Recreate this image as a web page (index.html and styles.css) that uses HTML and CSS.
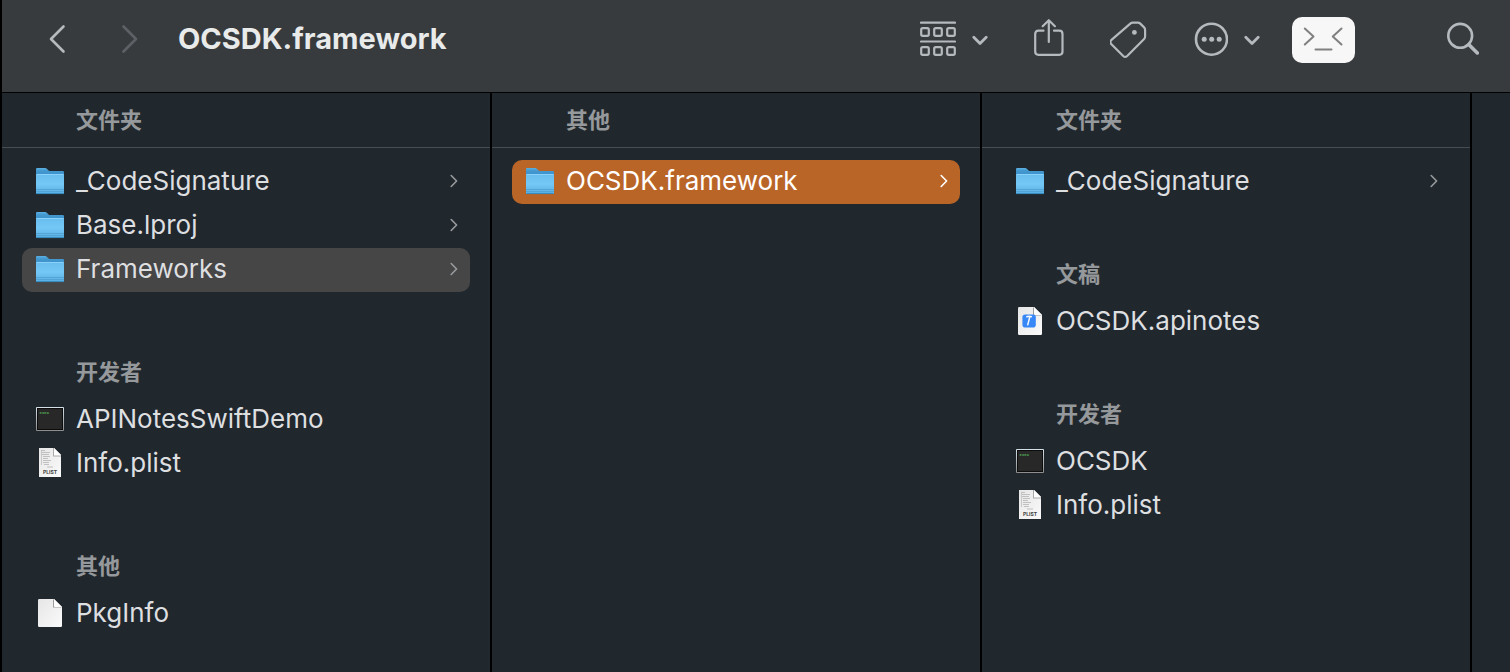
FILE: index.html
```html
<!DOCTYPE html>
<html lang="zh-CN">
<head>
<meta charset="utf-8">
<title>OCSDK.framework</title>
<link rel="stylesheet" href="styles.css">
</head>
<body>
<svg class="defs" aria-hidden="true">
  <defs>
    <linearGradient id="folder-back" x1="0" y1="0" x2="0" y2="1"><stop offset="0" stop-color="#5cb2e4"/><stop offset="0.3" stop-color="#4398cf"/><stop offset="1" stop-color="#3a8fca"/></linearGradient>
    <linearGradient id="folder-front" x1="0" y1="0" x2="0" y2="1"><stop offset="0" stop-color="#67bdee"/><stop offset="0.5" stop-color="#74c8f6"/><stop offset="1" stop-color="#56aee2"/></linearGradient>
    <linearGradient id="paper" x1="0" y1="0" x2="1" y2="1"><stop offset="0" stop-color="#e6e6e6"/><stop offset="1" stop-color="#fafafa"/></linearGradient>
    <linearGradient id="bezel" x1="0" y1="0" x2="0" y2="1"><stop offset="0" stop-color="#d5e2ea"/><stop offset="1" stop-color="#8c8c8c"/></linearGradient>
    <symbol id="folder" viewBox="0 0 28 28">
      <path d="M0 2.2Q0 1 1.2 1H9.2Q10 1 10.8 1.7L12.6 3.4Q13.2 4 14.2 4H26.8Q28 4 28 5.2V10H0Z" fill="url(#folder-back)"/>
      <path d="M0 7.800Q0 7 .8 7H27.200Q28 7 28 7.800V26Q28 27 27 27H1Q0 27 0 26Z" fill="url(#folder-front)"/>
      <path d="M0 22.500H28M0 24.500H28" stroke="#509fd0" stroke-width=".8"/>
      <path d="M.5 26.600H27.500" stroke="#3587bd" stroke-width="1"/>
      <path d="M.6 7.500H27.400" stroke="#8bd2fb" stroke-width="1"/>
    </symbol>
    <symbol id="exec" viewBox="0 0 28 28">
      <rect x="0" y="2" width="28" height="24" rx="1" fill="url(#bezel)"/>
      <rect x="1" y="3" width="26" height="22" fill="#0c0c0c"/>
      <rect x="2" y="4" width="24" height="20" fill="#282828"/>
      <text x="3.500" y="9" class="exec-label">exec</text>
    </symbol>
    <symbol id="file" viewBox="0 0 28 28">
      <path d="M2 1.200Q2 0 3.200 0H18L26 8V26.800Q26 28 24.800 28H3.200Q2 28 2 26.800Z" fill="url(#paper)"/>
      <path d="M17 1V8.500H25L25.600 8 18 0Z" fill="#9c9c9c"/>
      <path d="M18 0L26 8H19Q18 8 18 7Z" fill="#fff"/>
    </symbol>
    <symbol id="notes" viewBox="0 0 28 28">
      <use href="#file"/>
      <rect x="6.400" y="7.400" width="13.400" height="13.200" rx="2.800" fill="#3787f6"/>
      <path d="M10.300 10Q12.600 8.700 16 9.700M13.900 9.500L11.600 18.400" fill="none" stroke="#f4f8ff" stroke-width="1.500"/>
    </symbol>
    <symbol id="plist" viewBox="0 0 28 30">
      <path d="M3 0H18L25 7V29H3Z" fill="url(#paper)"/>
      <path d="M17 0V8.600H25V7L18 0Z" fill="#aaa"/>
      <path d="M18 0L25 7V7.600H18Z" fill="#fff"/>
      <path d="M5 2.500H9M6 4.500H14M6 6.500H13M7 8.500H14M7 10.500H12M7 12.500H15M7 14.500H13M8 16.500H13M11 19H17" stroke="#b4b4b4" stroke-width=".8"/>
      <path d="M5.500 3V17" stroke="#c9c9c9" stroke-width="1"/>
      <text x="14" y="26" text-anchor="middle" class="plist-label">PLIST</text>
    </symbol>
    <symbol id="arrow" viewBox="0 0 8 14"><path d="M1.200 1.500L6.600 7 1.200 12.500" fill="none" stroke="currentColor" stroke-width="1.600" stroke-linecap="round" stroke-linejoin="round"/></symbol>
    <symbol id="down" viewBox="0 0 16 40"><path d="M1.800 18.300L8 24.500 14.200 18.300" fill="none" stroke="currentColor" stroke-width="2.800" stroke-linecap="round" stroke-linejoin="round"/></symbol>
  </defs>
</svg>
<div class="window">
  <header class="toolbar">
    <nav class="history">
      <button type="button" aria-label="返回"><svg width="18" height="40" viewBox="0 0 18 40"><path d="M15.500 7.500L3 20 15.500 32.500" class="line-bold"/></svg></button>
      <button type="button" class="dim" aria-label="前进" disabled><svg width="18" height="40" viewBox="0 0 18 40"><path d="M2.500 7.500L15 20 2.500 32.500" class="line-bold"/></svg></button>
    </nav>
    <h1>OCSDK.framework</h1>
    <div class="tools">
      <button type="button" class="menu" aria-label="群组">
        <svg width="36" height="40" viewBox="0 0 36 40"><path d="M1 3.700H35M1 22.500H35" class="line"/><g class="line"><rect x="1.200" y="9.200" width="7.600" height="7.600" rx="1.500"/><rect x="14.200" y="9.200" width="7.600" height="7.600" rx="1.500"/><rect x="27.200" y="9.200" width="7.600" height="7.600" rx="1.500"/><rect x="1.200" y="28.200" width="7.600" height="7.600" rx="1.500"/><rect x="14.200" y="28.200" width="7.600" height="7.600" rx="1.500"/><rect x="27.200" y="28.200" width="7.600" height="7.600" rx="1.500"/></g></svg>
        <svg width="16" height="40"><use href="#down"/></svg>
      </button>
      <button type="button" aria-label="共享"><svg width="30" height="40" viewBox="0 0 30 40"><path d="M9.500 11.700H4.500Q1.200 11.700 1.200 15V32.500Q1.200 35.800 4.500 35.800H25.200Q28.500 35.800 28.500 32.500V15Q28.500 11.700 25.200 11.700H20M14.800 23V1.500M8.700 7.200L14.800 1.200 20.900 7.200" class="line"/></svg></button>
      <button type="button" aria-label="标签"><svg width="38" height="40" viewBox="0 0 38 40"><path d="M20.300 4.400Q21.200 3.600 22.500 3.600H27.500Q29 3.600 30 4.600L33.800 8.400Q34.800 9.400 34.800 10.900V17.500Q34.800 19 33.800 20L16.900 37Q14.900 38.800 12.900 37L.9 25Q-.9 23 .9 21.200Z" class="line" transform="translate(.3 0)"/><circle cx="24.400" cy="13.400" r="2.400" fill="currentColor"/></svg></button>
      <div class="pair">
        <button type="button" class="menu" aria-label="更多">
          <svg width="34" height="40" viewBox="0 0 34 40"><circle cx="17.500" cy="20.200" r="15.500" class="line-bold"/><g fill="currentColor"><circle cx="10.200" cy="20.200" r="2.500"/><circle cx="17.700" cy="20.200" r="2.500"/><circle cx="25.200" cy="20.200" r="2.500"/></g></svg>
          <svg width="16" height="40"><use href="#down"/></svg>
        </button>
        <button type="button" class="app" aria-label="终端"><svg width="63" height="46" viewBox="0 0 63 46"><path d="M12.800 11.500L21.500 19.500 12.800 27.500M49.500 11.500L40.800 19.500 49.500 27.500M23.500 32.500H39.500" class="face"/></svg></button>
      </div>
      <button type="button" class="search" aria-label="搜索"><svg width="32" height="40" viewBox="0 0 32 40"><circle cx="13.200" cy="16.800" r="11.900" class="line-bold"/><path d="M21.800 25.400L30.300 33.900" class="handle"/></svg></button>
    </div>
  </header>
  <main class="browser">
    <section class="column roomy">
      <h2 class="top">文件夹</h2>
      <div class="groups">
        <ul>
          <li><button type="button" class="row"><svg class="icon"><use href="#folder"/></svg><span>_CodeSignature</span><svg class="more"><use href="#arrow"/></svg></button></li>
          <li><button type="button" class="row"><svg class="icon"><use href="#folder"/></svg><span>Base.lproj</span><svg class="more"><use href="#arrow"/></svg></button></li>
          <li><button type="button" class="row open"><svg class="icon"><use href="#folder"/></svg><span>Frameworks</span><svg class="more"><use href="#arrow"/></svg></button></li>
        </ul>
        <div>
          <h2>开发者</h2>
          <ul>
            <li><button type="button" class="row"><svg class="icon"><use href="#exec"/></svg><span>APINotesSwiftDemo</span></button></li>
            <li><button type="button" class="row"><svg class="icon tall"><use href="#plist"/></svg><span>Info.plist</span></button></li>
          </ul>
        </div>
        <div>
          <h2>其他</h2>
          <ul><li><button type="button" class="row"><svg class="icon"><use href="#file"/></svg><span>PkgInfo</span></button></li></ul>
        </div>
      </div>
    </section>
    <section class="column">
      <h2 class="top">其他</h2>
      <div class="groups">
        <ul><li><button type="button" class="row selected"><svg class="icon"><use href="#folder"/></svg><span>OCSDK.framework</span><svg class="more"><use href="#arrow"/></svg></button></li></ul>
      </div>
    </section>
    <section class="column">
      <h2 class="top">文件夹</h2>
      <div class="groups">
        <ul><li><button type="button" class="row"><svg class="icon"><use href="#folder"/></svg><span>_CodeSignature</span><svg class="more"><use href="#arrow"/></svg></button></li></ul>
        <div>
          <h2>文稿</h2>
          <ul><li><button type="button" class="row"><svg class="icon"><use href="#notes"/></svg><span>OCSDK.apinotes</span></button></li></ul>
        </div>
        <div>
          <h2>开发者</h2>
          <ul>
            <li><button type="button" class="row"><svg class="icon"><use href="#exec"/></svg><span>OCSDK</span></button></li>
            <li><button type="button" class="row"><svg class="icon tall"><use href="#plist"/></svg><span>Info.plist</span></button></li>
          </ul>
        </div>
      </div>
    </section>
    <div class="rest"></div>
  </main>
</div>
</body>
</html>
```
FILE: styles.css
```css
* { box-sizing: border-box; }
body {
  margin: 0;
  background: #21282d;
  color: #dedfe0;
  font-family: Inter, "Noto Sans CJK SC", sans-serif;
}
h1, h2, ul { margin: 0; padding: 0; }
ul { list-style: none; }
button {
  border: 0;
  padding: 0;
  background: none;
  color: inherit;
  font: inherit;
}
svg { display: block; flex: none; }
.defs { position: absolute; width: 0; height: 0; }
.window {
  display: flex;
  flex-direction: column;
  min-height: 100vh;
  border-left: 2px solid #000;
}
.toolbar {
  display: flex;
  align-items: center;
  height: 93px;
  padding: 0 31px 14px 46px;
  background: #373b3e;
  border-bottom: 1px solid #000;
  color: #b5babe;
}
.history { display: flex; gap: 55px; }
.dim { color: #5d6165; }
h1 {
  margin-left: 39px;
  color: #e9eaea;
  font-size: 29px;
  line-height: 40px;
  font-weight: 700;
}
.tools {
  display: flex;
  align-items: center;
  gap: 46px;
  margin-left: auto;
}
.menu { display: flex; gap: 16px; }
.pair { display: flex; align-items: center; gap: 32px; }
.app {
  margin-top: 2px;
  border-radius: 10px;
  background: #f7f7f7;
}
.search { margin-left: 46px; }
.line, .line-bold, .handle, .face {
  fill: none;
  stroke: currentColor;
  stroke-width: 2.2;
  stroke-linecap: round;
  stroke-linejoin: round;
}
.line-bold { stroke-width: 2.6; }
.handle { stroke-width: 3.6; }
.face { stroke: #808080; stroke-width: 2; }
.browser { display: flex; flex: 1; }
.column {
  flex: 1;
  min-width: 0;
  border-right: 2px solid #000;
}
.rest { flex: 0 0 38px; }
h2 {
  padding: 0 0 2px 74px;
  color: #96999c;
  font-size: 22px;
  line-height: 48px;
  font-weight: 700;
}
h2.top {
  padding-top: 3px;
  padding-bottom: 3px;
  border-bottom: 1px solid #484d52;
}
.groups {
  display: flex;
  flex-direction: column;
  gap: 46px;
  padding-top: 12px;
}
.roomy .groups { gap: 56px; }
.groups ul { padding: 0 20px; }
.groups h2 { height: 50px; }
.row {
  display: flex;
  align-items: center;
  gap: 12px;
  width: 100%;
  height: 44px;
  padding: 0 12px 2px 14px;
  border-radius: 10px;
  font-size: 26px;
  line-height: 32px;
  text-align: left;
}
.row span { flex: 1; }
.icon { width: 28px; height: 28px; }
.icon.tall { height: 30px; }
.more { width: 8px; height: 14px; color: #989b9e; }
.open { background: #464646; }
.selected { background: #ba6528; color: #fff; }
.selected .more { color: #fff; }
.exec-label {
  fill: #55b559;
  font: 700 4px "Liberation Mono", monospace;
}
.plist-label {
  fill: #404040;
  font: 700 5px Inter, sans-serif;
}
```
